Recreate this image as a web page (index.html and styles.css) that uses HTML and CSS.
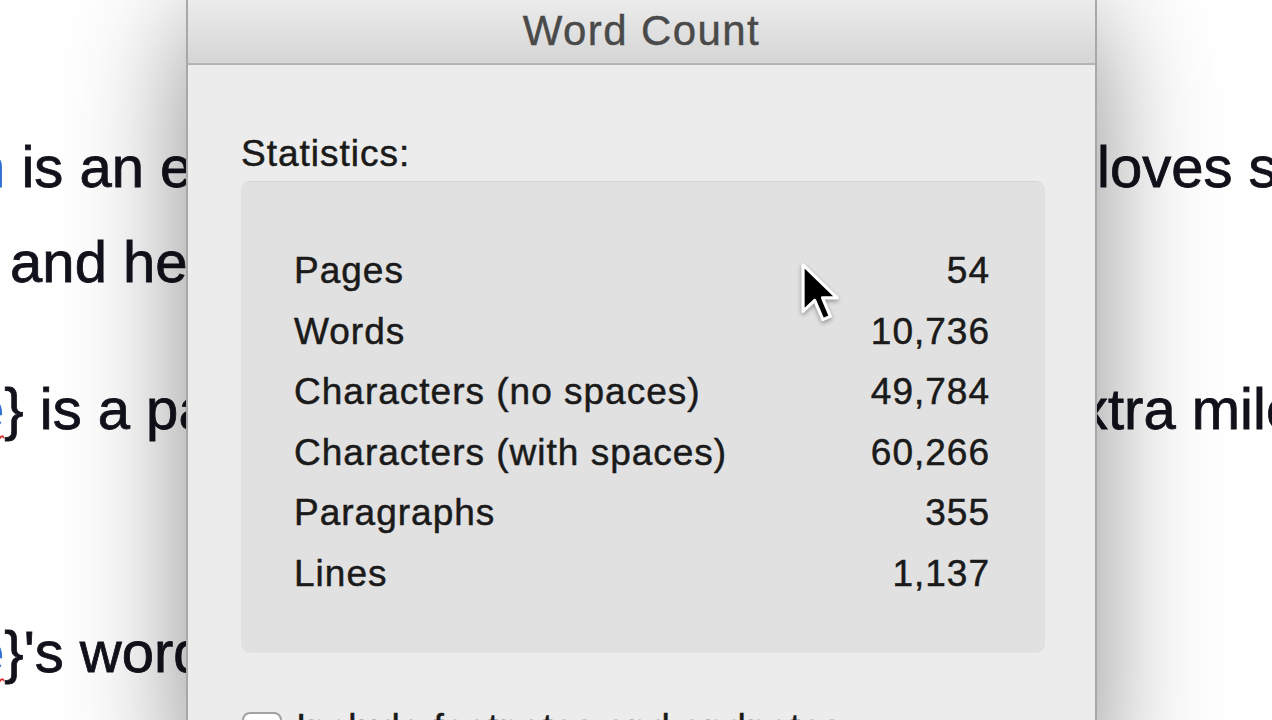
FILE: index.html
```html
<!DOCTYPE html>
<html lang="en">
<head>
<meta charset="UTF-8">
<meta name="viewport" content="width=device-width, initial-scale=1.0">
<title>Word Count</title>
<link rel="stylesheet" href="styles.css">
</head>
<body>

<div class="document">
    <div class="doc-line line1">
        <span class="lead"><span class="field">n</span> is an e</span>
        <span class="tail">loves spending</span>
    </div>
    <div class="doc-line line2">
        <span class="lead">&nbsp;and he</span>
        <span class="tail"></span>
    </div>
    <div class="doc-line line3">
        <span class="lead"><span class="field squiggle">e</span>} is a pa</span>
        <span class="tail tail-shift">xtra mile</span>
    </div>
    <div class="doc-line line4">
        <span class="lead"><span class="field squiggle">e</span>}'s word</span>
        <span class="tail"></span>
    </div>
</div>

<div class="dialog">
    <div class="titlebar">Word Count</div>
    <div class="dialog-body">
        <div class="section-label">Statistics:</div>
        <div class="stats">
            <div class="stat-row"><span>Pages</span><span>54</span></div>
            <div class="stat-row"><span>Words</span><span>10,736</span></div>
            <div class="stat-row"><span>Characters (no spaces)</span><span>49,784</span></div>
            <div class="stat-row"><span>Characters (with spaces)</span><span>60,266</span></div>
            <div class="stat-row"><span>Paragraphs</span><span>355</span></div>
            <div class="stat-row"><span>Lines</span><span>1,137</span></div>
        </div>
        <label class="check-row">
            <span class="checkbox"></span>
            <span>Include footnotes and endnotes</span>
        </label>
    </div>
</div>

<!-- mouse pointer -->
<svg class="pointer" viewBox="0 0 14 22" width="41" height="64">
    <path d="M1 1 L1 17 L5 13.2 L7.8 19.8 L10.4 18.7 L7.7 12.3 L12.7 12.3 Z" fill="#000" stroke="#fff" stroke-width="1.1" stroke-linejoin="round"/>
</svg>

</body>
</html>
```
FILE: styles.css
```css
body {
    margin: 0;
    width: 1272px;
    height: 720px;
    overflow: hidden;
    position: relative;
    background-color: #fff;
    font-family: "Liberation Sans", Arial, Helvetica, sans-serif;
}

/* page of the document behind the dialog */
.document {
    color: #12121c;
    font-size: 58px;
    line-height: 66px;
    -webkit-text-stroke: 0.8px #12121c;
}
.doc-line {
    display: flex;
    white-space: nowrap;
}
.line1 { margin-top: 134px; }
.line2 { margin-top: 29px; }
.line3 { margin-top: 81px; }
.line4 { margin-top: 177px; }
.lead {
    margin-left: -27px;
}
.field {
    color: #2f6fd0;
    -webkit-text-stroke: 0.8px #2f6fd0;
}
.squiggle {
    text-decoration: underline wavy #e03030;
    text-decoration-thickness: 2px;
    text-underline-offset: 6px;
}
.line2 .lead {
    margin-left: -6px;
}
.line3 .lead,
.line4 .lead {
    margin-left: -28px;
}
.tail {
    margin-left: auto;
    width: 175px;
    overflow: hidden;
}
.tail-shift {
    text-indent: -18px;
}

/* the word count sheet */
.dialog {
    position: absolute;
    left: 186px;
    top: 0;
    width: 907px;
    height: 780px;
    background-color: #ececec;
    border-left: 2px solid #a8a8a8;
    border-right: 2px solid #a8a8a8;
    box-shadow: 0 20px 110px rgba(0, 0, 0, 0.45);
    color: #1a1a1a;
}
.titlebar {
    height: 63px;
    line-height: 61px;
    text-align: center;
    font-size: 42px;
    letter-spacing: 1.4px;
    color: #4a4a4a;
    -webkit-text-stroke: 0.4px #4a4a4a;
    background: linear-gradient(#ececec, #d5d5d5);
    border-bottom: 2px solid #b4b4b4;
}
.dialog-body {
    padding: 67px 50px 0 53px;
    font-size: 37px;
    letter-spacing: 1px;
    -webkit-text-stroke: 0.5px #1a1a1a;
}
.section-label {
    line-height: 44px;
    margin-bottom: 5px;
}
.stats {
    height: 472px;
    box-sizing: border-box;
    padding: 59px 55px 0 53px;
    background-color: #e1e1e1;
    border-radius: 9px;
    border-top: 1px solid #d4d4d4;
}
.stat-row {
    display: flex;
    justify-content: space-between;
    height: 60.6px;
    line-height: 60px;
}
.check-row {
    display: flex;
    align-items: flex-start;
    gap: 14px;
    margin-top: 59px;
    line-height: 44px;
}
.checkbox {
    width: 36px;
    height: 36px;
    border: 2px solid #a2a2a2;
    border-radius: 8px;
    background: linear-gradient(#ffffff, #f2f2f2);
    margin-left: 1px;
}
.check-row span:last-child {
    margin-top: -6px;
}

.pointer {
    position: absolute;
    left: 800px;
    top: 262px;
    filter: drop-shadow(0 2px 2px rgba(0, 0, 0, 0.35));
}
```
